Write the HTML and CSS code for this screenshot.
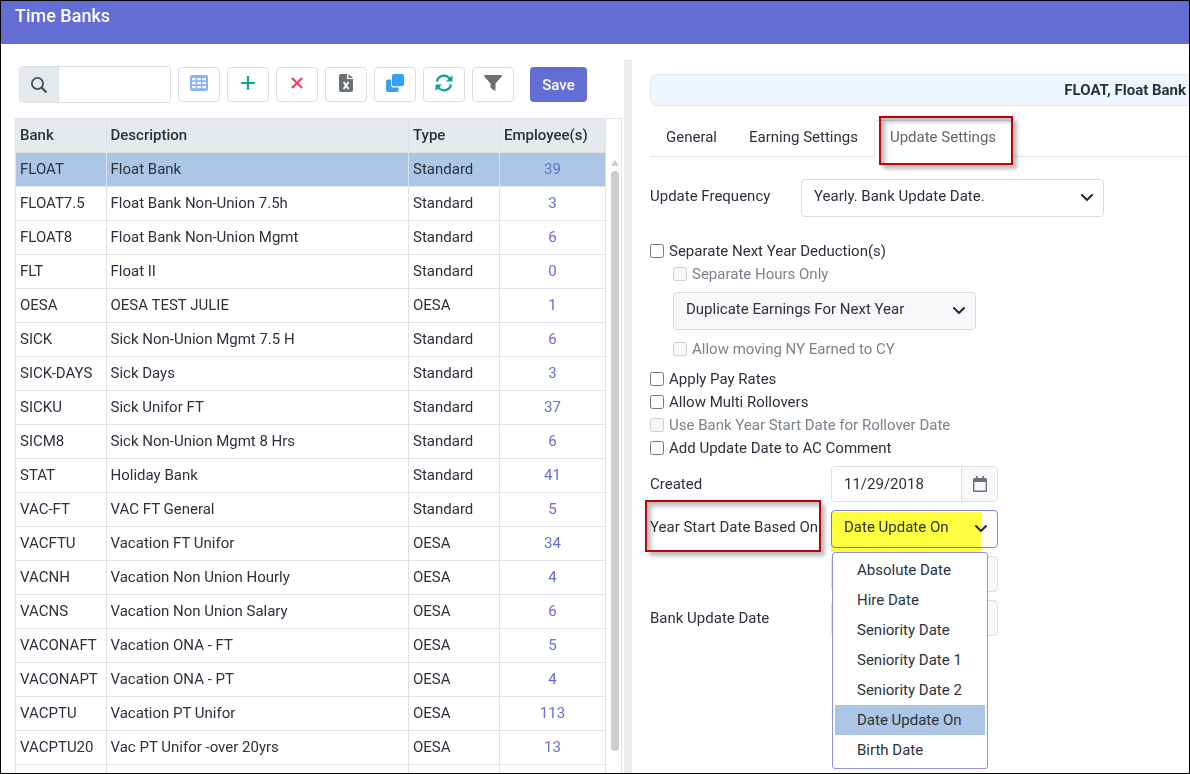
FILE: index.html
```html
<!DOCTYPE html>
<html lang="en">
<head>
<meta charset="utf-8">
<title>Time Banks</title>
<link rel="stylesheet" href="styles.css">
</head>
<body>
<div class="app">
  <header class="topbar"><h1 class="topbar-title">Time Banks</h1></header>
  <main class="split">
    <section class="banks">
      <div class="toolbar">
        <div class="search">
          <label class="search-icon" for="search"><svg width="18" height="18" viewBox="0 0 18 18" fill="none" stroke="#4a4f55" stroke-width="1.8"><circle cx="7.500" cy="7.500" r="5.600"/><path d="M11.600 11.600L16.500 16.500" stroke-width="2.200"/></svg></label>
          <input class="search-input" id="search" type="text" aria-label="Search banks">
        </div>
        <button class="tool" type="button" aria-label="Columns"><svg width="18" height="16" viewBox="0 0 18 16"><rect width="18" height="16" rx="2" fill="#8db1f5"/><path fill="#fff" d="M2 3h3.600v2.200H2zM7.200 3h3.600v2.200H7.200zM12.400 3H16v2.200h-3.600zM2 7h3.600v2.200H2zM7.200 7h3.600v2.200H7.200zM12.400 7H16v2.200h-3.600zM2 11h3.600v2.200H2zM7.200 11h3.600v2.200H7.200zM12.400 11H16v2.200h-3.600z"/></svg></button>
        <button class="tool" type="button" aria-label="Add"><svg width="16" height="16" viewBox="0 0 16 16" fill="none" stroke="#0ba595" stroke-width="2.200"><path d="M8 1v14M1 8h14"/></svg></button>
        <button class="tool" type="button" aria-label="Delete"><svg width="16" height="16" viewBox="0 0 16 16" fill="none" stroke="#ee3f5c" stroke-width="2.200"><path d="M3 3l10 10M13 3L3 13"/></svg></button>
        <button class="tool" type="button" aria-label="Export to Excel"><svg width="14" height="18" viewBox="0 0 14 18"><path fill="#697178" d="M2 0h6v5h6v11a2 2 0 0 1-2 2H2a2 2 0 0 1-2-2V2a2 2 0 0 1 2-2zM9.500 0L14 4H9.500z"/><path d="M4.600 8l5 7M9.600 8l-5 7" stroke="#fff" stroke-width="1.900"/></svg></button>
        <button class="tool" type="button" aria-label="Copy"><svg width="18" height="18" viewBox="0 0 18 18" fill="#35a1f6"><path d="M5 5.500H2A2 2 0 0 0 0 7.500V16a2 2 0 0 0 2 2h8.500a2 2 0 0 0 2-2v-2.500H7a2 2 0 0 1-2-2z"/><rect x="6" width="12" height="12.300" rx="2"/></svg></button>
        <button class="tool" type="button" aria-label="Refresh"><svg width="18" height="18" viewBox="0 0 18 18"><path fill="none" stroke="#0ba595" stroke-width="2.300" d="M2 7.500A7 7 0 0 1 14.800 5M16 10.500A7 7 0 0 1 3.200 13"/><path fill="#0ba595" d="M17.500 1v6.500H11zM.500 17v-6.500H7z"/></svg></button>
        <button class="tool" type="button" aria-label="Filter"><svg width="18" height="16" viewBox="0 0 18 16"><path fill="#697178" d="M.800 0h16.400c.8 0 1 .8.500 1.400L11.500 8.500V15c0 .8-.6 1-1.200.600L6.900 13c-.3-.2-.4-.5-.4-.8V8.500L.300 1.400C-.2.800 0 0 .800 0z"/></svg></button>
        <button class="save" type="button">Save</button>
      </div>
      <div class="grid">
        <table class="grid-table">
          <colgroup><col class="col-bank"><col><col class="col-type"><col class="col-count"></colgroup>
          <thead><tr><th>Bank</th><th>Description</th><th>Type</th><th>Employee(s)</th></tr></thead>
          <tbody>
            <tr class="selected"><td>FLOAT</td><td>Float Bank</td><td>Standard</td><td class="count"><a href="#">39</a></td></tr>
            <tr><td>FLOAT7.5</td><td>Float Bank Non-Union 7.5h</td><td>Standard</td><td class="count"><a href="#">3</a></td></tr>
            <tr><td>FLOAT8</td><td>Float Bank Non-Union Mgmt</td><td>Standard</td><td class="count"><a href="#">6</a></td></tr>
            <tr><td>FLT</td><td>Float II</td><td>Standard</td><td class="count"><a href="#">0</a></td></tr>
            <tr><td>OESA</td><td>OESA TEST JULIE</td><td>OESA</td><td class="count"><a href="#">1</a></td></tr>
            <tr><td>SICK</td><td>Sick Non-Union Mgmt 7.5 H</td><td>Standard</td><td class="count"><a href="#">6</a></td></tr>
            <tr><td>SICK-DAYS</td><td>Sick Days</td><td>Standard</td><td class="count"><a href="#">3</a></td></tr>
            <tr><td>SICKU</td><td>Sick Unifor FT</td><td>Standard</td><td class="count"><a href="#">37</a></td></tr>
            <tr><td>SICM8</td><td>Sick Non-Union Mgmt 8 Hrs</td><td>Standard</td><td class="count"><a href="#">6</a></td></tr>
            <tr><td>STAT</td><td>Holiday Bank</td><td>Standard</td><td class="count"><a href="#">41</a></td></tr>
            <tr><td>VAC-FT</td><td>VAC FT General</td><td>Standard</td><td class="count"><a href="#">5</a></td></tr>
            <tr><td>VACFTU</td><td>Vacation FT Unifor</td><td>OESA</td><td class="count"><a href="#">34</a></td></tr>
            <tr><td>VACNH</td><td>Vacation Non Union Hourly</td><td>OESA</td><td class="count"><a href="#">4</a></td></tr>
            <tr><td>VACNS</td><td>Vacation Non Union Salary</td><td>OESA</td><td class="count"><a href="#">6</a></td></tr>
            <tr><td>VACONAFT</td><td>Vacation ONA - FT</td><td>OESA</td><td class="count"><a href="#">5</a></td></tr>
            <tr><td>VACONAPT</td><td>Vacation ONA - PT</td><td>OESA</td><td class="count"><a href="#">4</a></td></tr>
            <tr><td>VACPTU</td><td>Vacation PT Unifor</td><td>OESA</td><td class="count"><a href="#">113</a></td></tr>
            <tr><td>VACPTU20</td><td>Vac PT Unifor -over 20yrs</td><td>OESA</td><td class="count"><a href="#">13</a></td></tr>
            <tr><td></td><td></td><td></td><td></td></tr>
          </tbody>
        </table>
        <div class="scroll"><svg width="8" height="6" viewBox="0 0 8 6"><path d="M4 0l4 6H0z" fill="#cfcdce"/></svg><div class="scroll-thumb"></div></div>
      </div>
    </section>
    <div class="splitter"></div>
    <section class="detail">
      <h2 class="banner">FLOAT, Float Bank</h2>
      <nav class="tabs">
        <button class="tab" type="button">General</button>
        <button class="tab" type="button">Earning Settings</button>
        <button class="tab active" type="button">Update Settings<span class="callout callout-tab"></span></button>
      </nav>
      <form class="form">
        <div class="row frequency">
          <label for="freq">Update Frequency</label>
          <div class="pick"><select id="freq"><option>Yearly. Bank Update Date.</option></select><svg class="chevron" width="14" height="10" viewBox="0 0 14 10"><path d="M2 2l5 5 5-5"/></svg></div>
        </div>
        <div class="separate">
          <label class="check"><input type="checkbox">Separate Next Year Deduction(s)</label>
          <div class="sub">
            <label class="check off"><input type="checkbox" disabled>Separate Hours Only</label>
            <div class="pick pick-off"><select aria-label="Next year earnings"><option>Duplicate Earnings For Next Year</option></select><svg class="chevron" width="14" height="10" viewBox="0 0 14 10"><path d="M2 2l5 5 5-5"/></svg></div>
            <label class="check off"><input type="checkbox" disabled>Allow moving NY Earned to CY</label>
          </div>
        </div>
        <div class="checks">
          <label class="check"><input type="checkbox">Apply Pay Rates</label>
          <label class="check"><input type="checkbox">Allow Multi Rollovers</label>
          <label class="check off"><input type="checkbox" disabled>Use Bank Year Start Date for Rollover Date</label>
          <label class="check"><input type="checkbox">Add Update Date to AC Comment</label>
        </div>
        <div class="dates">
          <label for="created">Created</label>
          <div class="date"><input id="created" type="text" value="11/29/2018"><button class="cal" type="button" aria-label="Open calendar"><svg width="14" height="16" viewBox="0 0 14 16"><path fill="#697178" d="M3 0h1.600v2h4.800V0H11v2h1.500A1.500 1.500 0 0 1 14 3.500v11a1.500 1.500 0 0 1-1.500 1.500h-11A1.500 1.500 0 0 1 0 14.500v-11A1.500 1.500 0 0 1 1.500 2H3z"/><path fill="#f8f8fb" d="M1.400 6h11.200v8.500H1.400z"/></svg></button></div>
          <label class="based" for="based">Year Start Date Based On<span class="callout callout-label"></span></label>
          <div class="pick pick-open">
            <select id="based"><option>Date Update On</option></select><svg class="chevron" width="14" height="10" viewBox="0 0 14 10"><path d="M2 2l5 5 5-5"/></svg>
            <span class="marker"></span>
            <ul class="menu" role="listbox" aria-label="Year start date options">
              <li role="option">Absolute Date</li>
              <li role="option">Hire Date</li>
              <li role="option">Seniority Date</li>
              <li role="option">Seniority Date 1</li>
              <li role="option">Seniority Date 2</li>
              <li class="chosen" role="option" aria-selected="true">Date Update On</li>
              <li role="option">Birth Date</li>
            </ul>
          </div>
          <span></span>
          <input class="blank" type="text" aria-label="Start date" disabled>
          <label for="bank-update">Bank Update Date</label>
          <input class="blank" id="bank-update" type="text" disabled>
        </div>
      </form>
    </section>
  </main>
</div>
</body>
</html>
```
FILE: styles.css
```css
* { box-sizing: border-box; }
body { margin: 0; font: 15px/20px Roboto, "Liberation Sans", sans-serif; color: #2c313d; background: #fff; }
button, input, select { font: inherit; color: inherit; margin: 0; }
.app { display: flex; flex-direction: column; height: 100vh; overflow: hidden; border: 1px solid #000; }
.topbar { flex: none; height: 43px; padding: 3px 14px; background: #636dd4; }
.topbar-title { margin: 0; font-size: 18px; line-height: 24px; font-weight: 500; color: #fff; }
.split { flex: 1; min-height: 0; display: grid; grid-template-columns: minmax(0, 623fr) 8px minmax(0, 557fr); grid-template-rows: minmax(0, 1fr); }
.banks { display: flex; flex-direction: column; padding: 22px 2px 0 14px; min-width: 0; }
.toolbar { display: flex; align-items: center; gap: 7px; padding-left: 4px; margin-bottom: 15px; }
.search { display: flex; width: 152px; height: 37px; border: 1px solid #dcdfe5; border-radius: 4px; overflow: hidden; }
.search-icon { flex: none; display: flex; align-items: center; justify-content: center; width: 39px; background: #e7eaed; border-right: 1px solid #dcdfe5; }
.search-input { flex: 1; min-width: 0; border: 0; }
.tool { display: flex; align-items: center; justify-content: center; width: 42px; height: 35px; padding: 0 0 4px; background: #fff; border: 1px solid #dcdee6; border-radius: 4px; }
.save { width: 57px; height: 35px; margin-left: 9px; padding: 0; background: #636dd4; color: #fff; border: 0; border-radius: 4px; font-weight: 500; }
.grid { flex: 1; min-height: 0; display: flex; border: 1px solid #e1e4ea; border-bottom: 0; overflow: hidden; }
.grid-table { flex: 1; table-layout: fixed; border-collapse: collapse; align-self: flex-start; }
.col-bank { width: 90px; }
.col-type { width: 91px; }
.col-count { width: 106px; }
.grid-table th, .grid-table td { height: 34px; padding: 0 4px 1px; border: 1px solid #dee1e8; border-top: 0; border-left: 0; text-align: left; }
.grid-table th { height: 33px; background: #e7eaed; font-weight: 500; }
.grid-table .selected td { background: #acc7e6; }
.grid-table .count { text-align: center; }
.count a { color: #636dd4; text-decoration: none; }
.scroll { flex: none; width: 15px; display: flex; flex-direction: column; align-items: center; gap: 5px; padding: 41px 0 22px 2px; }
.scroll svg { flex: none; }
.scroll-thumb { flex: 1; width: 8px; border-radius: 4px; background: #cfcdce; }
.splitter { margin-top: 15px; background: #ededed; }
.detail { padding: 30px 0 0 18px; min-width: 0; }
.banner { margin: 0 0 12px; padding: 5px 3px; font-size: 15px; line-height: 20px; font-weight: 700; text-align: right; background: #eef6ff; border: 1px solid #dfe8f1; border-right: 0; border-radius: 8px 0 0 8px; }
.tabs { display: flex; border-bottom: 1px solid #dfe2ea; padding-top: 2px; }
.tab { position: relative; height: 37px; margin-bottom: -1px; padding: 0 15px 3px; border: 1px solid transparent; background: none; white-space: nowrap; }
.tab.active { color: #5f666d; background: #fff; border-color: #dfe2ea #dfe2ea #fff; border-radius: 4px 4px 0 0; }
.callout { position: absolute; border: 2px solid #b80508; box-shadow: 4px 4px 4px #0004, inset 4px 4px 4px #0004; }
.callout-tab { top: -5px; left: 4px; right: -2px; bottom: -9px; }
.row { display: flex; align-items: center; }
.frequency { margin: 22px 0; }
.frequency label { flex: none; width: 151px; padding-bottom: 4px; }
.pick { position: relative; width: 303px; height: 38px; }
.pick select { width: 100%; height: 100%; appearance: none; padding: 0 36px 4px 12px; border: 1px solid #d9dbe4; border-radius: 4px; background: #fff; }
.chevron { position: absolute; top: 14px; right: 10px; fill: none; stroke: #222838; stroke-width: 2; stroke-linecap: round; stroke-linejoin: round; pointer-events: none; }
.pick-off select { background: #f8f8fb; }
.check { display: flex; align-items: center; gap: 5px; height: 23px; width: max-content; }
.check input { width: 14px; height: 14px; }
.off { color: #7a828b; }
.sub { padding-left: 23px; }
.sub .pick { margin: 7px 0; }
.checks { margin: 7px 0; }
.dates { display: grid; grid-template-columns: 181px 167px; row-gap: 8px; align-items: center; }
.date { display: flex; height: 36px; border: 1px solid #dcdfe5; border-radius: 4px; overflow: hidden; }
.date input { flex: 1; min-width: 0; padding: 0 12px; border: 0; }
.cal { flex: none; display: flex; align-items: center; justify-content: center; width: 36px; padding: 0; border: 0; border-left: 1px solid #dcdfe5; background: #f8f8fb; }
.based { position: relative; padding-bottom: 4px; white-space: nowrap; }
.callout-label { top: -17px; left: -5px; right: 10px; bottom: -11px; }
.pick-open { width: auto; }
.pick-open select { border-color: #7e86dc; padding-right: 30px; }
.marker { position: absolute; top: 2px; left: 0; width: 151px; height: 40px; background: #ffff42; mix-blend-mode: multiply; pointer-events: none; }
.menu { position: absolute; z-index: 2; top: 42px; left: 1px; width: 156px; margin: 0; padding: 2px 2px 3px; list-style: none; background: #fff; border: 1px solid #8c94df; border-radius: 3px; }
.menu li { padding: 0 0 0 22px; line-height: 30px; }
.menu .chosen { background: #acc7e6; }
.blank { width: 100%; height: 36px; border: 1px solid #dcdfe5; border-radius: 4px; background: #f8f8fb; }
```
